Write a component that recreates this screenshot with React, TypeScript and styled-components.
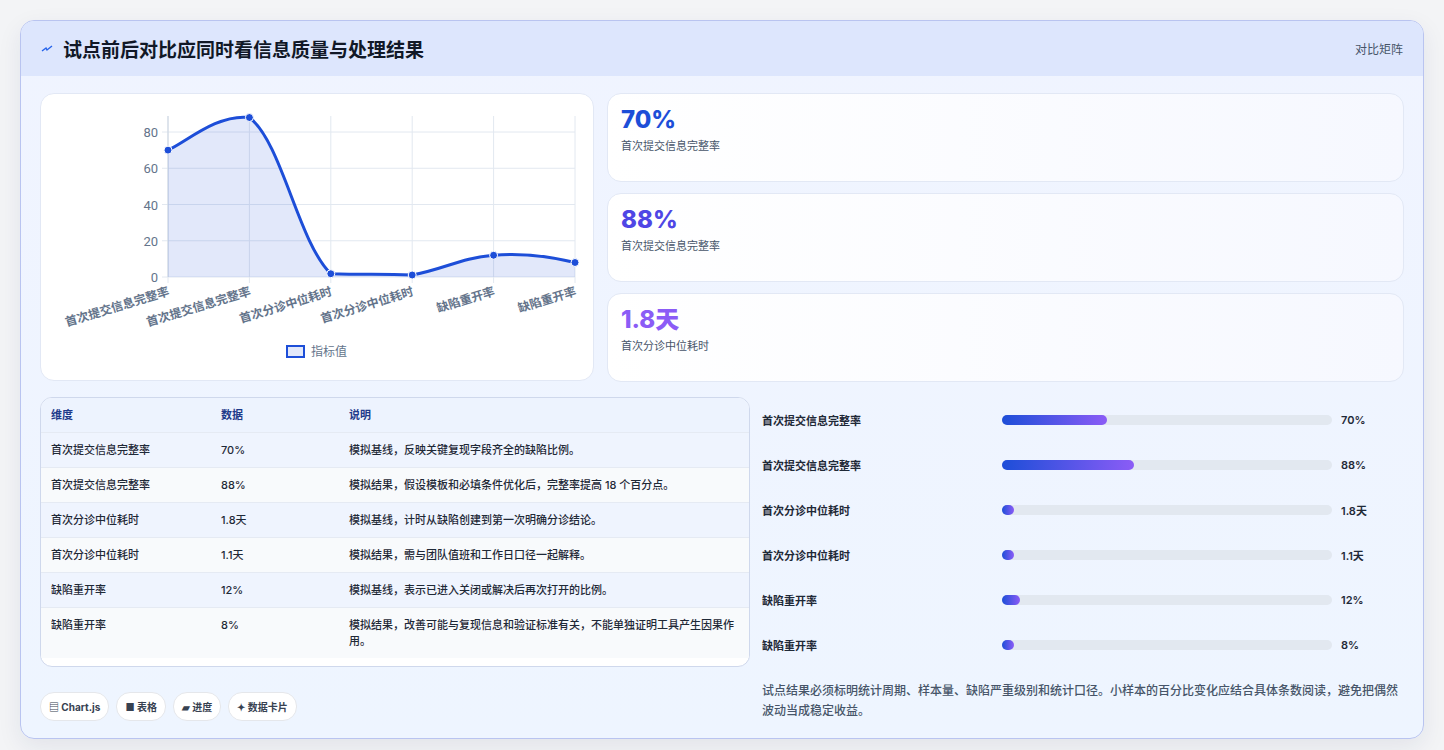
import React from 'react';
import styled, { createGlobalStyle } from 'styled-components';

const Global = createGlobalStyle`
  body { margin: 0; background: #f3f4f6; font-family: Inter, "Noto Sans CJK SC", sans-serif; color: #1e293b; }
`;

const Page = styled.div`
  padding: 20px;
`;

const Card = styled.div`
  border: 1px solid #b9c4f0;
  border-radius: 14px;
  background: linear-gradient(180deg, #f0f4ff 0%, #eef5ff 100%);
  overflow: hidden;
  box-shadow: 0 8px 24px rgba(30, 41, 90, 0.08);
`;

const Header = styled.div`
  height: 55px;
  display: flex;
  align-items: center;
  justify-content: space-between;
  padding: 0 20px;
  background: #dde6fd;
`;

const Title = styled.h1`
  margin: 0;
  font-size: 19px;
  font-weight: 700;
  color: #111827;
  display: flex;
  align-items: center;
  gap: 10px;
`;

const HeaderTag = styled.span`
  font-size: 12px;
  color: #475569;
`;

const Body = styled.div`
  padding: 17px 19px 17px 19px;
  display: flex;
  flex-direction: column;
  gap: 15px;
`;

const TopRow = styled.div`
  display: grid;
  grid-template-columns: 554px 1fr;
  column-gap: 13px;
`;

const BottomRow = styled.div`
  display: grid;
  grid-template-columns: 710px 1fr;
  column-gap: 12px;
  row-gap: 14px;
`;

const Panel = styled.div`
  background: #fff;
  border: 1px solid #e2e8f5;
  border-radius: 14px;
  height: 288px;
  box-sizing: border-box;
`;

const Stats = styled.div`
  display: flex;
  flex-direction: column;
  gap: 11px;
`;

const Stat = styled.div`
  height: 89px;
  box-sizing: border-box;
  background: linear-gradient(90deg, #ffffff 0%, #f6f8ff 100%);
  border: 1px solid #e2e8f5;
  border-radius: 14px;
  padding: 11px 13px;
`;

const StatValue = styled.div<{ $c: string }>`
  font-size: 24px;
  font-weight: 800;
  color: ${p => p.$c};
  line-height: 30px;
`;

const StatLabel = styled.div`
  font-size: 11px;
  color: #475569;
  margin-top: 2px;
`;

const Table = styled.div`
  border: 1px solid #cfd8ec;
  border-radius: 12px;
  overflow: hidden;
  background: #fff;
`;

const Row = styled.div<{ $alt?: boolean; $head?: boolean }>`
  display: grid;
  grid-template-columns: 170px 128px 1fr;
  padding: 0 10px;
  min-height: 34px;
  align-items: start;
  border-top: ${p => (p.$head ? 'none' : '1px solid #e5eaf3')};
  background: ${p => (p.$head ? '#edf3fe' : p.$alt ? '#f8fafc' : '#eff4fe')};
  font-size: 11px;
  color: ${p => (p.$head ? '#1e3a8a' : '#1f2937')};
  font-weight: ${p => (p.$head ? 600 : 500)};
  & > span { padding: 9px 0; line-height: 16px; }
`;

const Progress = styled.div`
  display: flex;
  flex-direction: column;
`;

const PRow = styled.div`
  height: 45px;
  display: grid;
  grid-template-columns: 231px 330px 1fr;
  column-gap: 9px;
  align-items: center;
  font-size: 11px;
  font-weight: 600;
  color: #1f2937;
`;

const Track = styled.div`
  height: 10px;
  border-radius: 5px;
  background: #e2e8f0;
`;

const Fill = styled.div`
  height: 100%;
  border-radius: 5px;
  min-width: 12px;
  background: linear-gradient(90deg, #1d4ed8, #8b5cf6);
`;

const Chips = styled.div`
  display: flex;
  gap: 7px;
  align-items: center;
  padding-top: 10px;
`;

const Chip = styled.span`
  background: #fff;
  border: 1px solid #e5e7eb;
  border-radius: 14px;
  padding: 6px 8px;
  font-size: 10px;
  font-weight: 700;
  color: #374151;
`;

const Note = styled.p`
  margin: 0;
  font-size: 12px;
  line-height: 20px;
  color: #475569;
  font-weight: 500;
`;

const data = [
  { k: '首次提交信息完整率', v: 70, s: '70%', d: '模拟基线，反映关键复现字段齐全的缺陷比例。' },
  { k: '首次提交信息完整率', v: 88, s: '88%', d: '模拟结果，假设模板和必填条件优化后，完整率提高 18 个百分点。' },
  { k: '首次分诊中位耗时', v: 1.8, s: '1.8天', d: '模拟基线，计时从缺陷创建到第一次明确分诊结论。' },
  { k: '首次分诊中位耗时', v: 1.1, s: '1.1天', d: '模拟结果，需与团队值班和工作日口径一起解释。' },
  { k: '缺陷重开率', v: 12, s: '12%', d: '模拟基线，表示已进入关闭或解决后再次打开的比例。' },
  { k: '缺陷重开率', v: 8, s: '8%', d: '模拟结果，改善可能与复现信息和验证标准有关，不能单独证明工具产生因果作用。' },
];

const X0 = 127, X1 = 534, Y0 = 183, K = 145 / 80;
const pts = data.map((d, i) => [X0 + ((X1 - X0) / 5) * i, Y0 - d.v * K]);

const clamp = (v: number, a: number, b: number) => Math.max(Math.min(a, b), Math.min(Math.max(a, b), v));

function curve() {
  let p = `M${pts[0][0]},${pts[0][1]}`;
  for (let i = 0; i < pts.length - 1; i++) {
    const a = pts[i - 1] || pts[i], b = pts[i], c = pts[i + 1], e = pts[i + 2] || c;
    const t = 0.2;
    const c1 = [b[0] + (c[0] - a[0]) * t, clamp(b[1] + (c[1] - a[1]) * t, b[1] - 6, c[1])];
    const c2 = [c[0] - (e[0] - b[0]) * t, clamp(c[1] - (e[1] - b[1]) * t, b[1], c[1] - 4)];
    p += ` C${c1[0]},${c1[1]} ${c2[0]},${c2[1]} ${c[0]},${c[1]}`;
  }
  return p;
}

const Chart = () => {
  const line = curve();
  const labelStyle = { fontSize: 12, fill: '#64748b', fontWeight: 600 };
  return (
    <svg width="552" height="286" style={{ fontFamily: 'Roboto, "Noto Sans CJK SC", sans-serif' }}>
      {[0, 20, 40, 60, 80].map(v => (
        <g key={v}>
          <line x1={X0 - 6} x2={X1} y1={Y0 - v * K} y2={Y0 - v * K} stroke="#e2e8f0" />
          <text x={X0 - 10} y={Y0 - v * K + 5} textAnchor="end" fontSize="13" fill="#64748b">{v}</text>
        </g>
      ))}
      {pts.map(([x], i) => (
        <line key={i} x1={x} x2={x} y1={22} y2={Y0 + 6} stroke="#e2e8f0" />
      ))}
      <line x1={X0} x2={X0} y1={22} y2={Y0} stroke="#cbd5e1" />
      <path d={`${line} L${X1},${Y0} L${X0},${Y0} Z`} fill="rgba(29,78,216,0.13)" />
      <path d={line} fill="none" stroke="#1d4ed8" strokeWidth="3" />
      {pts.map(([x, y], i) => (
        <circle key={i} cx={x} cy={y} r="4" fill="#1d4ed8" stroke="#fff" strokeWidth="1" />
      ))}
      {data.map((d, i) => (
        <text key={i} x={pts[i][0] + 2} y={Y0 + 18} textAnchor="end" transform={`rotate(-17 ${pts[i][0] + 2} ${Y0 + 18})`} style={labelStyle}>{d.k}</text>
      ))}
      <rect x="246" y="252" width="17" height="11" fill="rgba(29,78,216,0.13)" stroke="#1d4ed8" strokeWidth="2" />
      <text x="270" y="262" fontSize="12" fill="#64748b">指标值</text>
    </svg>
  );
};

export default function App() {
  return (
    <Page>
      <Global />
      <Card>
        <Header>
          <Title>
            <svg width="12" height="12" viewBox="0 0 12 12"><path d="M1 8 L5 5 L6 7 L11 3" stroke="#2563eb" strokeWidth="1.4" fill="none" /></svg>
            试点前后对比应同时看信息质量与处理结果
          </Title>
          <HeaderTag>对比矩阵</HeaderTag>
        </Header>
        <Body>
          <TopRow>
            <Panel><Chart /></Panel>
            <Stats>
              <Stat><StatValue $c="#1d4ed8">70%</StatValue><StatLabel>首次提交信息完整率</StatLabel></Stat>
              <Stat><StatValue $c="#4f46e5">88%</StatValue><StatLabel>首次提交信息完整率</StatLabel></Stat>
              <Stat><StatValue $c="#8b5cf6">1.8天</StatValue><StatLabel>首次分诊中位耗时</StatLabel></Stat>
            </Stats>
          </TopRow>
          <BottomRow>
            <Table>
              <Row $head><span>维度</span><span>数据</span><span>说明</span></Row>
              {data.map((d, i) => (
                <Row key={i} $alt={i % 2 === 1}><span>{d.k}</span><span>{d.s}</span><span>{d.d}</span></Row>
              ))}
            </Table>
            <Progress>
              {data.map((d, i) => (
                <PRow key={i}>
                  <span>{d.k}</span>
                  <Track><Fill style={{ width: `${d.v / 2.2}%` }} /></Track>
                  <span>{d.s}</span>
                </PRow>
              ))}
            </Progress>
            <Chips>
              <Chip>▤ Chart.js</Chip>
              <Chip>■ 表格</Chip>
              <Chip>▰ 进度</Chip>
              <Chip>✦ 数据卡片</Chip>
            </Chips>
            <Note>试点结果必须标明统计周期、样本量、缺陷严重级别和统计口径。小样本的百分比变化应结合具体条数阅读，避免把偶然波动当成稳定收益。</Note>
          </BottomRow>
        </Body>
      </Card>
    </Page>
  );
}
